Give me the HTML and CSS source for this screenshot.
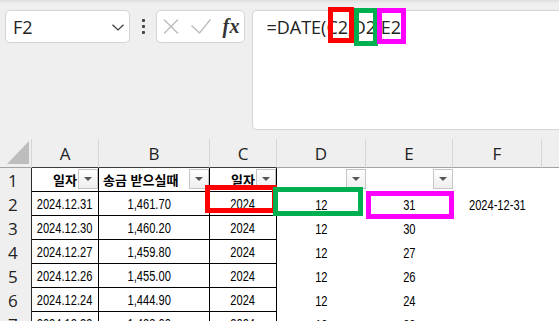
FILE: index.html
```html
<!DOCTYPE html>
<html lang="ko">
<head>
<meta charset="utf-8">
<title>Excel DATE</title>
<link rel="stylesheet" href="styles.css">
</head>
<body>
<div class="app">
  <div class="topband"></div>
  <div class="fbar">
    <div class="namebox">
      <span class="ref">F2</span>
      <svg class="chev" width="12" height="7" viewBox="0 0 12 7"><path d="M0.5 0.8 L6 6 L11.5 0.8" fill="none" stroke="#3a3a3a" stroke-width="1.2"/></svg>
    </div>
    <div class="dots"><i></i><i></i><i></i></div>
    <div class="fxbox">
      <svg class="ico-x" width="16" height="15" viewBox="0 0 16 15"><path d="M1 0.5 L15 14.5 M15 0.5 L1 14.5" fill="none" stroke="#bdbdbd" stroke-width="1.4"/></svg>
      <svg class="ico-ok" width="20" height="15" viewBox="0 0 20 15"><path d="M0.5 6.5 L8.5 14 L19.5 0.5" fill="none" stroke="#bdbdbd" stroke-width="1.4"/></svg>
      <span class="fx">fx</span>
    </div>
    <div class="formula">=DATE(C2,D2,E2)</div>
  </div>

  <div class="sheet">
    <div class="corner"><span class="tri"></span></div>
    <div class="ch">A</div><div class="ch">B</div><div class="ch">C</div><div class="ch">D</div><div class="ch">E</div><div class="ch">F</div><div class="ch last"></div>

    <div class="rh">1</div>
    <div class="c b hd"><span class="t r">일자</span><span class="flt"></span></div>
    <div class="c b hd"><span class="t l">송금 받으실때</span><span class="flt"></span></div>
    <div class="c b hd"><span class="t r">일자</span><span class="flt"></span></div>
    <div class="c hd"><span class="t"></span><span class="flt"></span></div>
    <div class="c hd"><span class="t"></span><span class="flt"></span></div>
    <div class="c"></div><div class="c"></div>

    <div class="rh">2</div>
    <div class="c b"><span class="v">2024.12.31</span></div><div class="c b num"><span class="v">1,461.70</span></div><div class="c b"><span class="v">2024</span></div>
    <div class="c"><span class="v">12</span></div><div class="c"><span class="v">31</span></div><div class="c"><span class="v">2024-12-31</span></div><div class="c"></div>

    <div class="rh">3</div>
    <div class="c b"><span class="v">2024.12.30</span></div><div class="c b num"><span class="v">1,460.20</span></div><div class="c b"><span class="v">2024</span></div>
    <div class="c"><span class="v">12</span></div><div class="c"><span class="v">30</span></div><div class="c"></div><div class="c"></div>

    <div class="rh">4</div>
    <div class="c b"><span class="v">2024.12.27</span></div><div class="c b num"><span class="v">1,459.80</span></div><div class="c b"><span class="v">2024</span></div>
    <div class="c"><span class="v">12</span></div><div class="c"><span class="v">27</span></div><div class="c"></div><div class="c"></div>

    <div class="rh">5</div>
    <div class="c b"><span class="v">2024.12.26</span></div><div class="c b num"><span class="v">1,455.00</span></div><div class="c b"><span class="v">2024</span></div>
    <div class="c"><span class="v">12</span></div><div class="c"><span class="v">26</span></div><div class="c"></div><div class="c"></div>

    <div class="rh">6</div>
    <div class="c b"><span class="v">2024.12.24</span></div><div class="c b num"><span class="v">1,444.90</span></div><div class="c b"><span class="v">2024</span></div>
    <div class="c"><span class="v">12</span></div><div class="c"><span class="v">24</span></div><div class="c"></div><div class="c"></div>

    <div class="rh">7</div>
    <div class="c b"><span class="v">2024.12.23</span></div><div class="c b num"><span class="v">1,438.00</span></div><div class="c b"><span class="v">2024</span></div>
    <div class="c"><span class="v">12</span></div><div class="c"><span class="v">23</span></div><div class="c"></div><div class="c"></div>
  </div>

  <div class="mark red fb-c2"></div>
  <div class="mark green fb-d2"></div>
  <div class="mark magenta fb-e2"></div>
  <div class="mark red cell-c2"></div>
  <div class="mark green cell-d2"></div>
  <div class="mark magenta cell-e2"></div>
</div>
</body>
</html>
```

FILE: styles.css
```css
html, body {
  margin: 0;
  padding: 0;
}
body {
  width: 559px;
  height: 321px;
  overflow: hidden;
  background: #efefef;
  font-family: "Open Sans", "Noto Sans", sans-serif;
  color: #222;
}
.app {
  position: relative;
  width: 559px;
  height: 321px;
  overflow: hidden;
}
.topband {
  height: 5px;
  background: linear-gradient(#dedede, #ececec 60%, #efefef);
}
.fbar {
  display: flex;
  align-items: flex-start;
  height: 120px;
  padding-left: 5px;
  margin-top: 5px;
}
.namebox {
  box-sizing: border-box;
  width: 126px;
  height: 33px;
  background: #fff;
  border: 1px solid #d4d4d4;
  border-radius: 5px;
  display: flex;
  align-items: center;
  justify-content: space-between;
  padding: 0 5px 0 7px;
}
.ref {
  font-size: 18px;
  color: #222;
  line-height: 1;
  margin-top: 1px;
}
.chev {
  display: block;
  margin-top: 1px;
}
.dots {
  width: 27px;
  height: 33px;
  display: flex;
  flex-direction: column;
  align-items: center;
  justify-content: center;
  gap: 3px;
}
.dots i {
  display: block;
  width: 3px;
  height: 3px;
  background: #444;
  border-radius: 1px;
}
.fxbox {
  box-sizing: border-box;
  width: 90px;
  height: 33px;
  background: #fff;
  border: 1px solid #d4d4d4;
  border-radius: 5px;
  display: flex;
  align-items: center;
  padding-left: 6px;
}
.ico-x { display: block; margin-right: 12px; }
.ico-ok { display: block; margin-right: 11px; }
.fx {
  font-family: "Liberation Serif", "DejaVu Serif", serif;
  font-style: italic;
  font-weight: 700;
  font-size: 20px;
  color: #333;
  letter-spacing: 0.5px;
  line-height: 1;
  margin-top: -2px;
}
.formula {
  box-sizing: border-box;
  margin-left: 7px;
  width: 310px;
  height: 120px;
  background: #fff;
  border: 1px solid #d4d4d4;
  border-radius: 5px 0 0 5px;
  border-right: none;
  padding: 4px 0 0 13px;
  font-size: 18px;
  line-height: 24px;
  color: #222;
}

/* sheet */
.sheet {
  margin-top: 9px;
  display: grid;
  grid-template-columns: 32px 67px 111px 67px 89px 87px 89px 1fr;
  grid-template-rows: 29px;
  grid-auto-rows: 24px;
}
.corner {
  box-sizing: border-box;
  border-right: 1px solid #d6d6d6;
  border-bottom: 1px solid #a3a3a3;
  display: flex;
  align-items: flex-end;
  justify-content: flex-end;
  padding: 0 2px 3px 0;
}
.tri {
  display: block;
  width: 0;
  height: 0;
  border-left: 22px solid transparent;
  border-bottom: 23px solid #bdbdbd;
}
.ch {
  box-sizing: border-box;
  border-right: 1px solid #d6d6d6;
  border-bottom: 1px solid #a3a3a3;
  display: flex;
  align-items: center;
  justify-content: center;
  font-size: 17px;
  color: #222;
  padding-top: 1px;
}
.ch:nth-child(2), .ch:nth-child(3), .ch:nth-child(4) {
  border-bottom-color: #3c3c3c;
}
.ch.last { border-right: none; }
.rh {
  box-sizing: border-box;
  border-right: 1px solid #2a2a2a;
  font-size: 17px;
  color: #222;
  padding-left: 8px;
  display: flex;
  align-items: center;
}
.c {
  box-sizing: border-box;
  background: #fff;
  display: flex;
  align-items: center;
  justify-content: center;
  font-family: "Liberation Sans", "Arial", sans-serif;
  font-size: 15px;
  color: #000;
  white-space: nowrap;
  overflow: hidden;
}
.v {
  display: inline-block;
  transform: scaleX(0.74);
}
.c.b {
  border-right: 1px solid #000;
  border-bottom: 1px solid #000;
}
.c.num { padding-right: 9px; }
.c.hd {
  justify-content: flex-start;
  align-items: flex-start;
  font-family: "Noto Sans CJK KR", sans-serif;
  font-weight: 700;
  font-size: 13px;
  padding-top: 1px;
}
.t {
  flex: 1;
  min-width: 0;
  overflow: hidden;
  height: 20px;
  line-height: 21px;
}
.t.r { text-align: right; padding-right: 1px; }
.t.l { text-align: left; padding-left: 4px; }
.flt {
  box-sizing: border-box;
  flex: none;
  width: 20px;
  height: 20px;
  border: 1px solid #c6c6c6;
  background: linear-gradient(#ffffff, #eeeeee);
  display: flex;
  align-items: center;
  justify-content: center;
}
.flt::after {
  content: "";
  display: block;
  width: 0;
  height: 0;
  border-left: 4px solid transparent;
  border-right: 4px solid transparent;
  border-top: 4px solid #555;
}

/* highlight boxes */
.mark {
  position: absolute;
  box-sizing: border-box;
  border: 5px solid;
}
.red { border-color: #ff0000; }
.green { border-color: #00b050; }
.magenta { border-color: #ff00ff; }
.fb-c2 { left: 328px; top: 7px; width: 26px; height: 36px; }
.fb-d2 { left: 354px; top: 8px; width: 24px; height: 38px; }
.fb-e2 { left: 377px; top: 8px; width: 29px; height: 36px; }
.cell-c2 { left: 205px; top: 185px; width: 72px; height: 28px; }
.cell-d2 { left: 273px; top: 187px; width: 90px; height: 29px; }
.cell-e2 { left: 366px; top: 191px; width: 88px; height: 28px; }
```
